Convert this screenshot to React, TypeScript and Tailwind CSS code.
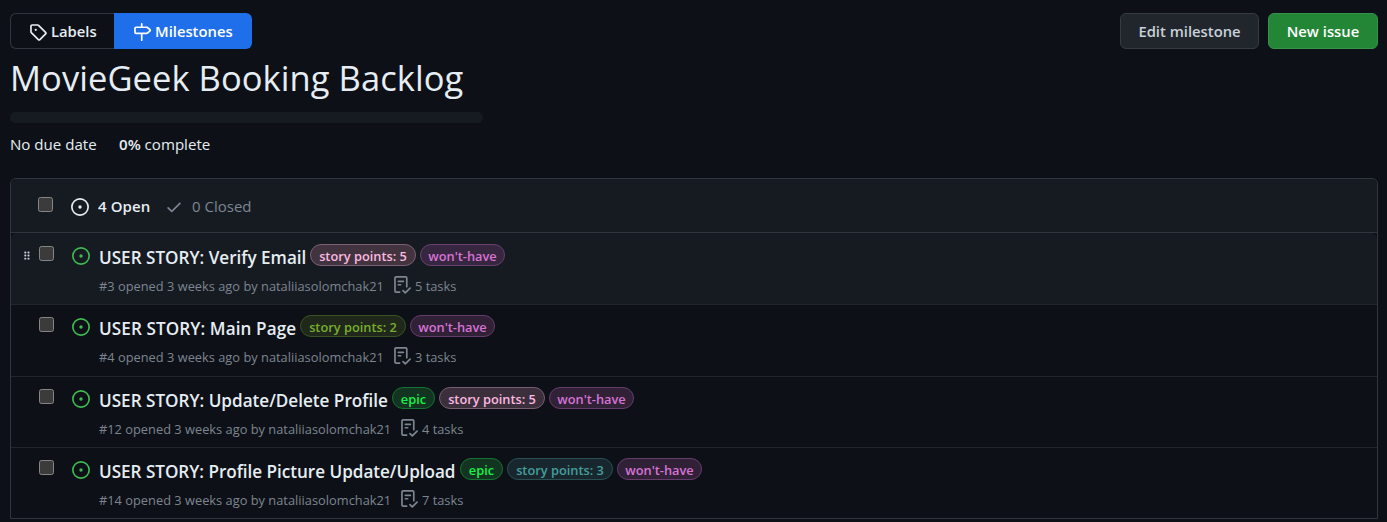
import React from "react";

const ISSUE =
  "M8 9.5a1.5 1.5 0 1 0 0-3 1.5 1.5 0 0 0 0 3Z M8 0a8 8 0 1 1 0 16A8 8 0 0 1 8 0ZM1.5 8a6.5 6.5 0 1 0 13 0 6.5 6.5 0 0 0-13 0Z";
const TAG =
  "M1 7.775V2.75C1 1.784 1.784 1 2.75 1h5.025c.464 0 .91.184 1.238.513l6.25 6.25a1.75 1.75 0 0 1 0 2.474l-5.026 5.026a1.75 1.75 0 0 1-2.474 0l-6.25-6.25A1.752 1.752 0 0 1 1 7.775Zm1.5 0c0 .066.026.13.073.177l6.25 6.25a.25.25 0 0 0 .354 0l5.025-5.025a.25.25 0 0 0 0-.354l-6.25-6.25a.25.25 0 0 0-.177-.073H2.75a.25.25 0 0 0-.25.25ZM6 5a1 1 0 1 1 0 2 1 1 0 0 1 0-2Z";
const MILESTONE =
  "M7.75 0a.75.75 0 0 1 .75.75V3h3.634c.414 0 .814.147 1.13.414l2.07 1.75a1.75 1.75 0 0 1 0 2.672l-2.07 1.75a1.75 1.75 0 0 1-1.13.414H8.5v5.25a.75.75 0 0 1-1.5 0V10H2.75A1.75 1.75 0 0 1 1 8.25v-3.5C1 3.784 1.784 3 2.75 3H7V.75A.75.75 0 0 1 7.75 0Zm4.384 8.5a.25.25 0 0 0 .161-.06l2.07-1.75a.248.248 0 0 0 0-.38l-2.07-1.75a.25.25 0 0 0-.161-.06H2.75a.25.25 0 0 0-.25.25v3.5c0 .138.112.25.25.25h9.384Z";
const CHECK =
  "M13.78 4.22a.75.75 0 0 1 0 1.06l-7.25 7.25a.75.75 0 0 1-1.06 0L2.22 9.28a.751.751 0 0 1 .018-1.042.751.751 0 0 1 1.042-.018L6 10.94l6.72-6.72a.75.75 0 0 1 1.06 0Z";

function Icon({ d, className = "" }: { d: string; className?: string }) {
  return (
    <svg viewBox="0 0 16 16" fill="currentColor" className={`size-[18px] shrink-0 ${className}`}>
      <path d={d} />
    </svg>
  );
}

function Checklist() {
  return (
    <svg
      viewBox="0 0 16 16"
      fill="none"
      stroke="currentColor"
      strokeWidth="1.5"
      strokeLinecap="round"
      strokeLinejoin="round"
      className="mb-[3px] size-[18px] shrink-0"
    >
      <path d="M5.9 14.25H2.75a1 1 0 0 1-1-1V1.75a1 1 0 0 1 1-1h8.5a1 1 0 0 1 1 1v7.7" />
      <path d="M4.75 4.75h4.5M4.75 7.75h2M8.9 13l2 2 4.3-4.3" />
    </svg>
  );
}

function Grabber() {
  return (
    <svg viewBox="0 0 8 10" fill="#c9d1d9" className="h-[10px] w-2">
      {[2, 5.2].map((x) =>
        [1, 4, 7.2].map((y) => <rect key={`${x}-${y}`} x={x - 0.7} y={y - 0.4} width="2" height="1.8" rx="0.6" />)
      )}
    </svg>
  );
}

function Checkbox({ className = "" }: { className?: string }) {
  return (
    <span
      role="checkbox"
      aria-checked="false"
      className={`block size-[15px] shrink-0 rounded-[2.5px] border border-[#858585] bg-[#3b3b3b] ${className}`}
    />
  );
}

const kinds = {
  pink: "w-[106px] text-[#fbb8e0] bg-[#41343f] border-[#7b6075]",
  pinkDark: "w-[106px] text-[#fbb8e0] bg-[#3a2f3b] border-[#785d72]",
  lime: "w-[106px] text-[#78ae2f] bg-[#1f281b] border-[#3b5123]",
  teal: "w-[106px] text-[#469d9c] bg-[#18272e] border-[#285053]",
  purple: "w-[85px] text-[#d673d5] bg-[#37263f] border-[#6a3f70]",
  purpleDark: "w-[85px] text-[#d673d5] bg-[#302136] border-[#663c6c]",
  epic: "w-[43px] text-[#16f14a] bg-[#123420] border-[#147331]",
};

type Kind = keyof typeof kinds;

interface Issue {
  title: string;
  titleClass: string;
  meta: string;
  metaClass: string;
  tasks: string;
  labels: [Kind, string][];
  rowClass: string;
  active?: boolean;
}

const issues: Issue[] = [
  {
    title: "USER STORY: Verify Email",
    titleClass: "w-[207px]",
    meta: "#3 opened 3 weeks ago by nataliiasolomchak21",
    metaClass: "w-[294px]",
    tasks: "5 tasks",
    labels: [["pink", "story points: 5"], ["purple", "won't-have"]],
    rowClass: "h-[72px] pt-[11px] border-b rounded-t-md bg-[#161b22]",
    active: true,
  },
  {
    title: "USER STORY: Main Page",
    titleClass: "w-[197px] tracking-[0.1px]",
    meta: "#4 opened 3 weeks ago by nataliiasolomchak21",
    metaClass: "w-[294px]",
    tasks: "3 tasks",
    labels: [["lime", "story points: 2"], ["purpleDark", "won't-have"]],
    rowClass: "h-[72px] pt-[10px] border-b",
  },
  {
    title: "USER STORY: Update/Delete Profile",
    titleClass: "w-[289px]",
    meta: "#12 opened 3 weeks ago by nataliiasolomchak21",
    metaClass: "w-[301px]",
    tasks: "4 tasks",
    labels: [["epic", "epic"], ["pinkDark", "story points: 5"], ["purpleDark", "won't-have"]],
    rowClass: "h-[71px] pt-[10px] border-b",
  },
  {
    title: "USER STORY: Profile Picture Update/Upload",
    titleClass: "w-[357px] tracking-[-0.02px]",
    meta: "#14 opened 3 weeks ago by nataliiasolomchak21",
    metaClass: "w-[301px]",
    tasks: "7 tasks",
    labels: [["epic", "epic"], ["teal", "story points: 3"], ["purpleDark", "won't-have"]],
    rowClass: "h-[70px] pt-[10px]",
  },
];

function IssueRow({ issue }: { issue: Issue }) {
  return (
    <div className={`flex items-start border-[#21262d] ${issue.rowClass}`}>
      <div className="flex w-7 shrink-0 justify-start pl-3 pt-[7px]">{issue.active && <Grabber />}</div>
      <Checkbox className="mt-0.5" />
      <Icon d={ISSUE} className="ml-[18px] mt-[3px] text-[#3fb950]" />
      <div className="ml-[9px] flex flex-col">
        <div className="flex h-[22px] items-center gap-1 whitespace-nowrap">
          <span
            className={`pt-[5px] text-[17.1px] font-semibold leading-[22px] text-[#e6edf3] ${issue.titleClass}`}
          >
            {issue.title}
          </span>
          {issue.labels.map(([kind, text]) => (
            <span
              key={text}
              className={`flex h-[22px] shrink-0 items-center justify-center rounded-full border pt-px text-[12.8px] font-semibold leading-5 ${kinds[kind]}`}
            >
              {text}
            </span>
          ))}
        </div>
        <div className="mt-[9px] flex h-[22px] items-center whitespace-nowrap text-[12.8px] text-[#7d8590]">
          <span className={`pt-px tracking-[0.02px] ${issue.metaClass}`}>{issue.meta}</span>
          <Checklist />
          <span className="ml-1 pt-px">{issue.tasks}</span>
        </div>
      </div>
    </div>
  );
}

export default function App() {
  return (
    <div className="h-[522px] overflow-hidden bg-[#0d1117] pl-[10px] pr-[9px] pt-[13px] font-['Open_Sans','Noto_Sans',sans-serif] text-[#e6edf3]">
      <div className="flex h-9 justify-between whitespace-nowrap text-[14.8px] font-semibold">
        <div className="flex">
          <button className="flex w-[104px] items-center rounded-l-md border border-r-0 border-[#30363d] pl-[18px]">
            <Icon d={TAG} className="mt-0.5" />
            <span className="ml-1">Labels</span>
          </button>
          <button className="flex w-[138px] items-center rounded-r-md bg-[#1f6feb] pl-[19px] text-white">
            <Icon d={MILESTONE} className="mt-0.5" />
            <span className="ml-1">Milestones</span>
          </button>
        </div>
        <div className="flex gap-[9px]">
          <button className="w-[139px] rounded-md border border-[#363b42] bg-[#21262d] text-[#c9d1d9]">
            Edit milestone
          </button>
          <button className="w-[110px] rounded-md border border-[#36914a] bg-[#238636] text-white">New issue</button>
        </div>
      </div>
      <h1 className="mt-[6px] h-[47px] whitespace-nowrap text-[34.5px] leading-[46px] tracking-[0.06px]">
        MovieGeek Booking Backlog
      </h1>
      <div className="mt-[10px] h-[11px] w-[473px] rounded-md bg-[#161b22]" />
      <div className="mt-[9px] flex h-6 items-center whitespace-nowrap text-[15.1px]">
        <span className="w-[109px]">No due date</span>
        <span>
          <strong className="font-semibold">0%</strong> complete
        </span>
      </div>
      <div className="mt-[22px] h-[341px] rounded-t-md border border-[#30363d]">
        <div className="flex h-[54px] items-center rounded-t-md border-b border-[#30363d] bg-[#161b22] text-[15px]">
          <Checkbox className="mb-[3px] ml-[27px]" />
          <Icon d={ISSUE} className="ml-[18px] mt-[3px]" />
          <span className="ml-[9px] mt-0.5 w-[67px] whitespace-nowrap font-semibold tracking-[0.1px]">4 Open</span>
          <Icon d={CHECK} className="mt-[3px] text-[#7d8590]" />
          <span className="ml-[9px] mt-0.5 text-[#7d8590]">0 Closed</span>
        </div>
        {issues.map((issue) => (
          <IssueRow key={issue.title} issue={issue} />
        ))}
      </div>
    </div>
  );
}
